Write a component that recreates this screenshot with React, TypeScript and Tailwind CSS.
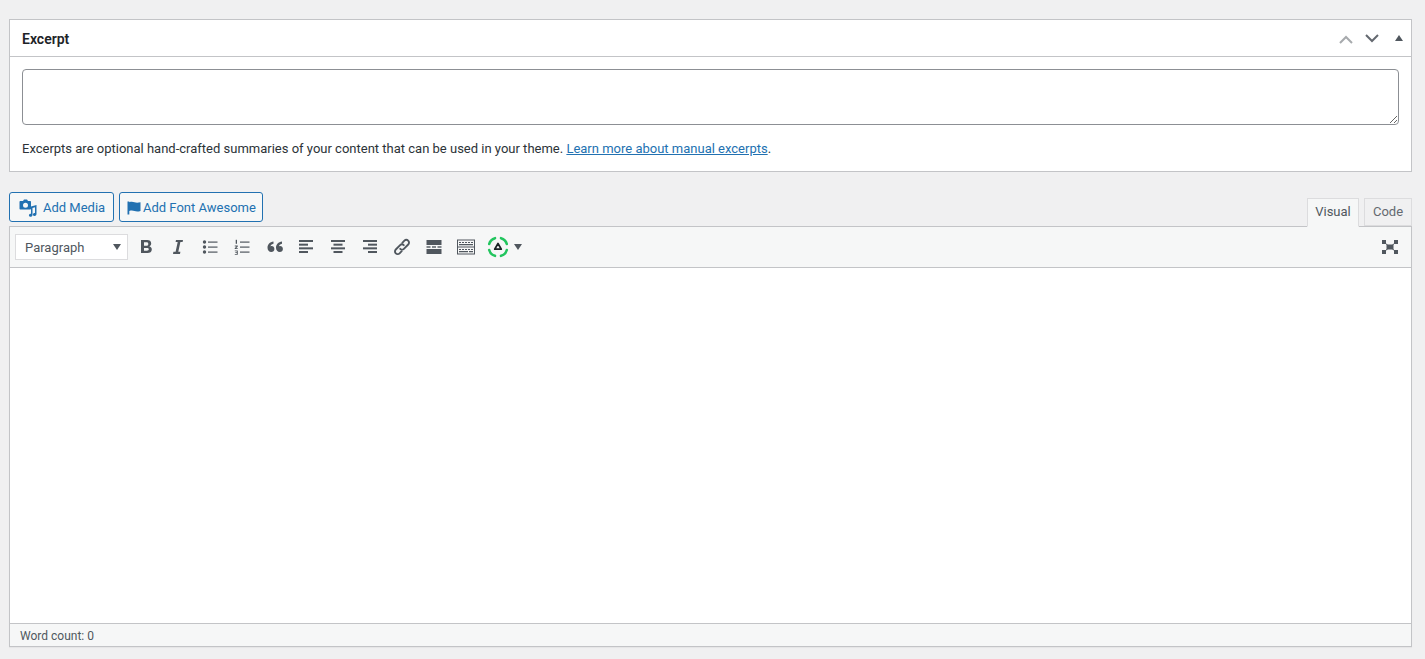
const iconClass = "w-5 h-5 text-[#50575e]";

function ToolIcon({ children }: { children: React.ReactNode }) {
  return (
    <div className="w-7 h-[30px] mr-1 flex items-center justify-center shrink-0">
      <svg viewBox="0 0 20 20" className={iconClass} fill="currentColor">{children}</svg>
    </div>
  );
}

function TextLines({ rows }: { rows: number[][] }) {
  return (
    <>
      {rows.map((r, i) => (
        <rect key={i} x={r[0]} y={3 + i * 3.67} width={r[1]} height="2" />
      ))}
    </>
  );
}

function Toolbar() {
  return (
    <div className="h-[41px] bg-[#f6f7f7] border-b border-[#c3c4c7] flex items-center pl-[5px] pr-[11px]">
      <div className="w-[113px] h-[26px] mr-[4px] bg-white border border-[#dcdcde] flex items-center justify-between pl-[9px] pr-[6px] text-[13px] text-[#50575e]">
        <span className="relative top-[1px]">Paragraph</span>
        <span className="w-0 h-0 border-x-[4.5px] border-x-transparent border-t-[6px] border-t-[#50575e]" />
      </div>
      <ToolIcon>
        <path fillRule="evenodd" d="M5 3h6.200c2.400 0 4 1.200 4 3.400 0 1.400-.8 2.500-2 2.900 1.600.4 2.600 1.600 2.600 3.200 0 2.400-1.800 3.500-4.300 3.500H5V3zm3 2.300V8.800h2.600c1.100 0 1.700-.6 1.700-1.800 0-1.100-.6-1.700-1.700-1.700H8zm0 5.600v2.800h2.800c1.300 0 2-.5 2-1.400 0-1-.7-1.400-2-1.400H8z" />
      </ToolIcon>
      <ToolIcon>
        <path d="M8 3h7l-.4 2h-2.200l-2.100 9.800h2.100L12 17H5l.4-2.200h2.200L9.700 5H7.600z" />
      </ToolIcon>
      <ToolIcon>
        <circle cx="4.500" cy="5" r="1.700" />
        <circle cx="4.500" cy="10" r="1.700" />
        <circle cx="4.500" cy="15" r="1.700" />
        <rect x="8" y="4.500" width="9.500" height="1.200" />
        <rect x="8" y="9.500" width="9.500" height="1.200" />
        <rect x="8" y="14.500" width="9.500" height="1.200" />
      </ToolIcon>
      <ToolIcon>
        <rect x="3.700" y="2.800" width="1.300" height="4" />
        <path d="M2.800 8.500h3v.9l-1.700 1.800h1.700v.9H2.700v-.9l1.800-1.800H2.800zM2.800 13.500h3v4.200h-3v-.8h2v-.9H3.300v-.8h1.500v-.9h-2z" />
        <rect x="8" y="4.500" width="9.500" height="1.200" />
        <rect x="8" y="9.500" width="9.500" height="1.200" />
        <rect x="8" y="14.500" width="9.500" height="1.200" />
      </ToolIcon>
      <ToolIcon>
        <path d="M9.500 4.500v2.200c-1.900.5-2.900 1.400-3 2.700.3-.2.700-.3 1.100-.3 1.600 0 2.800 1.200 2.800 2.900 0 1.800-1.300 3-3.100 3-2.200 0-3.800-1.700-3.800-4.200 0-3.400 2.300-5.700 6-6.300zM18 4.500v2.200c-1.900.5-2.900 1.400-3 2.700.3-.2.700-.3 1.100-.3 1.600 0 2.800 1.200 2.800 2.900 0 1.800-1.300 3-3.100 3-2.200 0-3.800-1.700-3.800-4.200 0-3.400 2.300-5.700 6-6.300z" />
      </ToolIcon>
      <ToolIcon>
        <TextLines rows={[[3, 14], [3, 9], [3, 14], [3, 9]]} />
      </ToolIcon>
      <ToolIcon>
        <TextLines rows={[[3, 14], [5.500, 9], [3, 14], [5.500, 9]]} />
      </ToolIcon>
      <ToolIcon>
        <TextLines rows={[[3, 14], [8, 9], [3, 14], [8, 9]]} />
      </ToolIcon>
      <ToolIcon>
        <g fill="none" stroke="currentColor" strokeWidth="1.900" strokeLinecap="round">
          <path d="M8.200 11.800c1 1 2.700 1 3.700 0l4.300-4.300c1.100-1.100 1.100-2.800 0-3.800-1.100-1.100-2.700-1.100-3.800 0L10.300 5.800" />
          <path d="M11.800 8.200c-1-1-2.700-1-3.700 0l-4.300 4.300c-1.100 1.100-1.100 2.800 0 3.800 1.100 1.100 2.700 1.100 3.800 0l2.100-2.100" />
        </g>
      </ToolIcon>
      <ToolIcon>
        <rect x="2.500" y="3" width="15" height="5" />
        <rect x="2.500" y="9.300" width="4" height="1.400" />
        <rect x="8" y="9.300" width="4" height="1.400" />
        <rect x="13.500" y="9.300" width="4" height="1.400" />
        <rect x="2.500" y="12" width="15" height="5" />
      </ToolIcon>
      <ToolIcon>
        <path fillRule="evenodd" d="M1 2.500h18v15H1zM2 3.500v6h16v-6zM2 10.500v6h16v-6z" />
        <path d="M3 5h2v1H3zM6 5h2v1H6zM9 5h2v1H9zM12 5h2v1h-2zM15 5h2v1h-2zM3 7h14v1.200H3zM3 12h2v1H3zM6 12h2v1H6zM9 12h2v1H9zM12 12h2v1h-2zM15 12h2v1h-2zM3 14h9v1.200H3zM13 14h4v1.200h-4z" />
      </ToolIcon>
      <div className="h-[30px] flex items-center gap-[5px] shrink-0 ml-[3px]">
        <svg viewBox="0 0 22 22" className="w-[22px] h-[22px]">
          <g fill="none" stroke="#22c55e" strokeWidth="2.600" strokeLinecap="round">
            <path d="M8 2.200C5 3 3 5 2.200 8" />
            <path d="M14 2.200C17 3 19 5 19.800 8" />
            <path d="M2.200 14C3 17 5 19 8 19.800" />
            <path d="M19.800 14C19 17 17 19 14 19.800" />
          </g>
          <path d="M11 7.500l3.300 5.700H7.700z" fill="none" stroke="#1d2327" strokeWidth="1.700" strokeLinejoin="round" />
        </svg>
        <span className="w-0 h-0 border-x-[4.500px] border-x-transparent border-t-[6px] border-t-[#50575e]" />
      </div>
      <div className="ml-auto w-5 h-5">
        <svg viewBox="0 0 20 20" className={iconClass} fill="currentColor">
          <rect x="6.500" y="7.500" width="7" height="5" />
          <rect x="2" y="3" width="4" height="4" />
          <rect x="14" y="3" width="4" height="4" />
          <rect x="2" y="13" width="4" height="4" />
          <rect x="14" y="13" width="4" height="4" />
          <path d="M5 6l3 2.500M15 6l-3 2.500M5 14l3-2.500M15 14l-3-2.500" stroke="currentColor" strokeWidth="1" fill="none" />
        </svg>
      </div>
    </div>
  );
}

export default function App() {
  return (
    <div className="min-h-screen bg-[#f0f0f1] pt-[19px] pl-[9px] pr-[13px] font-['Roboto','Noto_Sans',sans-serif] text-[13px] text-[#2c3338]">
      <div className="bg-white border border-[#c3c4c7]">
        <div className="h-[37px] pt-[2px] border-b border-[#c3c4c7] flex items-center justify-between pl-3 pr-[8px]">
          <h2 className="text-[14px] font-semibold text-[#1d2327]">Excerpt</h2>
          <div className="flex items-center">
            <svg viewBox="0 0 16 10" className="w-4 h-[10px] mr-[10px] text-[#a7aaad]" fill="none" stroke="currentColor" strokeWidth="2">
              <path d="M2 9l6-6 6 6" />
            </svg>
            <svg viewBox="0 0 16 10" className="w-4 h-[10px] mr-[15px] text-[#646970]" fill="none" stroke="currentColor" strokeWidth="2">
              <path d="M2 1l6 6 6-6" />
            </svg>
            <span className="w-0 h-0 mb-[2px] border-x-[4px] border-x-transparent border-b-[6px] border-b-[#50575e]" />
          </div>
        </div>
        <div className="pt-3 px-3 pb-[13px]">
          <textarea className="block w-full h-14 bg-white border border-[#8c8f94] rounded-[4px] outline-none" />
          <p className="mt-[15px] leading-[18px]">
            Excerpts are optional hand-crafted summaries of your content that can be used in your theme.{" "}
            <a href="#" className="text-[#2271b1] underline">Learn more about manual excerpts</a>.
          </p>
        </div>
      </div>

      <div className="mt-5 flex items-end justify-between h-[34px]">
        <div className="flex gap-[5px] self-start">
          <button className="h-[30px] w-[105px] pt-[1px] flex items-center gap-[5px] pl-[8px] bg-[#f6f7f7] border border-[#2271b1] rounded-[3px] text-[#2271b1]">
            <svg viewBox="0 0 20 20" className="w-5 h-5" fill="currentColor">
              <path fillRule="evenodd" d="M2.500 3H5l1-1.500h3L10 3h2c.6 0 1 .4 1 1v6.500c0 .6-.4 1-1 1H2.500c-.6 0-1-.4-1-1V4c0-.6.4-1 1-1zm5 1.800a2.500 2.500 0 100 5 2.500 2.500 0 000-5z" />
              <path d="M13 8.500l5.500-1.500v9c0 1.200-.9 2-2 2-.9 0-1.600-.6-1.600-1.500s.8-1.600 1.800-1.600l.3.100V9.200l-2.500.7V17c0 1.100-.9 1.800-2 1.800-.9 0-1.600-.6-1.600-1.500s.8-1.500 1.800-1.500l.3.100z" />
            </svg>
            <span>Add Media</span>
          </button>
          <button className="h-[30px] w-[144px] pt-[1px] flex items-center gap-[2px] pl-[7px] bg-[#f6f7f7] border border-[#2271b1] rounded-[3px] text-[#2271b1]">
            <svg viewBox="0 0 14 14" className="w-[14px] h-[14px]" fill="currentColor">
              <path d="M0.500 0.500h1.800v13H.5zM2.300 1.200c2-.8 3.700-.5 5.200 0s3 .7 6 0v8.800c-3 .8-4.500.5-6 0s-3.200-.8-5.200 0z" />
            </svg>
            <span>Add Font Awesome</span>
          </button>
        </div>
        <div className="flex gap-[5px] items-end relative top-[1px] z-10">
          <div className="w-[52px] h-[29px] pb-[2px] bg-[#f6f7f7] border border-[#dcdcde] border-b-[#f6f7f7] flex items-center justify-center text-[#50575e]">Visual</div>
          <div className="w-[48px] h-[28px] mb-[1px] bg-[#f0f0f1] border border-[#dcdcde] flex items-center justify-center text-[#646970]">Code</div>
        </div>
      </div>

      <div className="bg-white border border-[#c3c4c7] shadow-[0_1px_1px_rgba(0,0,0,0.04)]">
        <Toolbar />
        <div className="h-[355px] bg-white" />
        <div className="h-[23px] bg-[#f6f7f7] border-t border-[#c3c4c7] pl-[10px] flex items-center text-[12px] text-[#50575e]">
          <span className="relative top-[1px]">Word count: 0</span>
        </div>
      </div>
    </div>
  );
}
